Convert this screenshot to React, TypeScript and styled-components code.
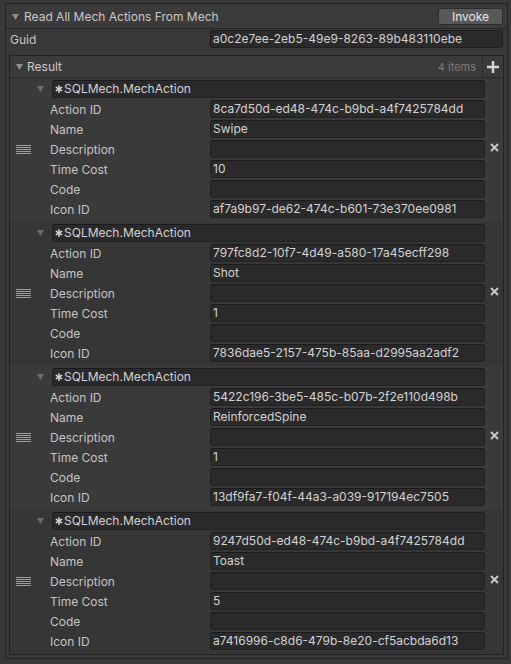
import React from 'react';
import styled, { createGlobalStyle } from 'styled-components';

const Global = createGlobalStyle`
  html, body { margin: 0; padding: 0; background: #383838; }
  body {
    font-family: Inter, "Noto Sans", sans-serif;
    font-size: 12px;
    color: #c4c4c4;
  }
  * { box-sizing: border-box; }
`;

const Outer = styled.div`
  margin: 3px 3px 0 5px;
  border: 1px solid #232323;
  background: #383838;
`;

const Header = styled.div`
  height: 25px;
  display: flex;
  align-items: center;
  padding: 1px 4px 0 6px;
  background: #3b3b3b;
  border-bottom: 1px solid #262626;
`;

const Title = styled.span<{ $ml?: number }>`
  margin-left: ${(p) => p.$ml ?? 5}px;
  color: #c8c8c8;
  white-space: nowrap;
`;

const InvokeButton = styled.div`
  margin-left: auto;
  width: 65px;
  height: 17px;
  border: 1px solid #2c2c2c;
  border-radius: 3px;
  background: #585858;
  color: #e6e6e6;
  display: flex;
  align-items: center;
  justify-content: center;
  line-height: 1;
`;

const Body = styled.div`
  padding: 0 3px 3px;
`;

const GuidRow = styled.div`
  height: 20px;
  display: flex;
  align-items: center;
  padding: 0 1px;
`;

const Label = styled.span<{ $w: number }>`
  width: ${(p) => p.$w}px;
  flex: none;
  color: #c4c4c4;
  white-space: nowrap;
`;

const Field = styled.div`
  flex: 1;
  height: 18px;
  background: #2a2a2a;
  border: 1px solid #212121;
  border-top-color: #1b1b1b;
  border-radius: 3px;
  padding: 0 2px;
  display: flex;
  align-items: center;
  color: #d2d2d2;
  white-space: nowrap;
  overflow: hidden;
  line-height: 16px;
`;

const ResultBox = styled.div`
  margin-top: 6px;
  border: 1px solid #232323;
`;

const ResultHeader = styled.div`
  height: 22px;
  display: flex;
  align-items: center;
  padding-left: 6px;
  background: #3b3b3b;
  border-bottom: 1px solid #2a2a2a;
`;

const Count = styled.span`
  margin-left: auto;
  padding-right: 6px;
  font-size: 11px;
  color: #7c7c7c;
`;

const PlusBox = styled.div`
  width: 21px;
  height: 100%;
  border-left: 1px solid #2c2c2c;
  display: flex;
  align-items: center;
  justify-content: center;
`;

const Items = styled.div`
  display: flex;
  flex-direction: column;
`;

const Item = styled.div<{ $odd: boolean }>`
  display: grid;
  grid-template-columns: 26px 1fr 18px;
  padding: 2px 0 4px;
  background: ${(p) => (p.$odd ? '#363636' : '#3a3a3a')};
`;

const Handle = styled.div`
  align-self: center;
  padding-left: 6px;
  display: flex;
  margin-top: 2px;
`;

const Remove = styled.div`
  align-self: start;
  margin-top: 63px;
  display: flex;
  justify-content: center;
  padding-left: 1px;
`;

const Content = styled.div`
  display: flex;
  flex-direction: column;
  gap: 2px;
`;

const ItemHeader = styled.div`
  height: 18px;
  display: flex;
  align-items: center;
  padding-left: 1px;
`;

const HeaderField = styled(Field)`
  margin-left: 8px;
  gap: 1px;
`;

const PropRow = styled.div`
  height: 18px;
  display: flex;
  align-items: center;
  padding-left: 14px;
`;

const Triangle = ({ color = '#8e8e8e' }: { color?: string }) => (
  <svg width="7" height="6" viewBox="0 0 7 6" style={{ flex: 'none' }}>
    <polygon points="0,0 7,0 3.5,6" fill={color} />
  </svg>
);

const Asterisk = () => (
  <svg width="8" height="8" viewBox="0 0 8 8" style={{ flex: 'none' }}>
    <g stroke="#d6d6d6" strokeWidth="1.6" strokeLinecap="butt">
      <line x1="4" y1="0.3" x2="4" y2="7.7" />
      <line x1="0.8" y1="2.15" x2="7.2" y2="5.85" />
      <line x1="0.8" y1="5.85" x2="7.2" y2="2.15" />
    </g>
  </svg>
);

const Plus = () => (
  <svg width="12" height="12" viewBox="0 0 12 12">
    <rect x="4.75" y="0" width="2.5" height="12" fill="#d6d6d6" />
    <rect x="0" y="4.75" width="12" height="2.5" fill="#d6d6d6" />
  </svg>
);

const Cross = () => (
  <svg width="9" height="9" viewBox="0 0 9 9">
    <g stroke="#cacaca" strokeWidth="2" strokeLinecap="butt">
      <line x1="1" y1="1" x2="8" y2="8" />
      <line x1="8" y1="1" x2="1" y2="8" />
    </g>
  </svg>
);

const DragLines = () => (
  <svg width="15" height="10" viewBox="0 0 15 10">
    {[0.5, 2.5, 4.5, 6.5, 8.5].map((y) => (
      <line key={y} x1="0" y1={y} x2="15" y2={y} stroke="#9c9c9c" strokeWidth="1" />
    ))}
  </svg>
);

type Action = {
  id: string;
  name: string;
  description: string;
  timeCost: string;
  code: string;
  iconId: string;
};

const actions: Action[] = [
  { id: '8ca7d50d-ed48-474c-b9bd-a4f7425784dd', name: 'Swipe', description: '', timeCost: '10', code: '', iconId: 'af7a9b97-de62-474c-b601-73e370ee0981' },
  { id: '797fc8d2-10f7-4d49-a580-17a45ecff298', name: 'Shot', description: '', timeCost: '1', code: '', iconId: '7836dae5-2157-475b-85aa-d2995aa2adf2' },
  { id: '5422c196-3be5-485c-b07b-2f2e110d498b', name: 'ReinforcedSpine', description: '', timeCost: '1', code: '', iconId: '13df9fa7-f04f-44a3-a039-917194ec7505' },
  { id: '9247d50d-ed48-474c-b9bd-a4f7425784dd', name: 'Toast', description: '', timeCost: '5', code: '', iconId: 'a7416996-c8d6-479b-8e20-cf5acbda6d13' },
];

export default function App() {
  return (
    <>
      <Global />
      <Outer>
        <Header>
          <Triangle />
          <Title>Read All Mech Actions From Mech</Title>
          <InvokeButton>Invoke</InvokeButton>
        </Header>
        <Body>
          <GuidRow>
            <Label $w={200}>Guid</Label>
            <Field>a0c2e7ee-2eb5-49e9-8263-89b483110ebe</Field>
          </GuidRow>
          <ResultBox>
            <ResultHeader>
              <Triangle />
              <Title $ml={4}>Result</Title>
              <Count>4 items</Count>
              <PlusBox>
                <Plus />
              </PlusBox>
            </ResultHeader>
            <Items>
              {actions.map((a, i) => {
                const rows: [string, string][] = [
                  ['Action ID', a.id],
                  ['Name', a.name],
                  ['Description', a.description],
                  ['Time Cost', a.timeCost],
                  ['Code', a.code],
                  ['Icon ID', a.iconId],
                ];
                return (
                  <Item key={i} $odd={i % 2 === 1}>
                    <Handle>
                      <DragLines />
                    </Handle>
                    <Content>
                      <ItemHeader>
                        <Triangle color="#6c6c6c" />
                        <HeaderField>
                          <Asterisk />
                          <span>SQLMech.MechAction</span>
                        </HeaderField>
                      </ItemHeader>
                      {rows.map(([l, v]) => (
                        <PropRow key={l}>
                          <Label $w={160}>{l}</Label>
                          <Field>{v}</Field>
                        </PropRow>
                      ))}
                    </Content>
                    <Remove>
                      <Cross />
                    </Remove>
                  </Item>
                );
              })}
            </Items>
          </ResultBox>
        </Body>
      </Outer>
    </>
  );
}
